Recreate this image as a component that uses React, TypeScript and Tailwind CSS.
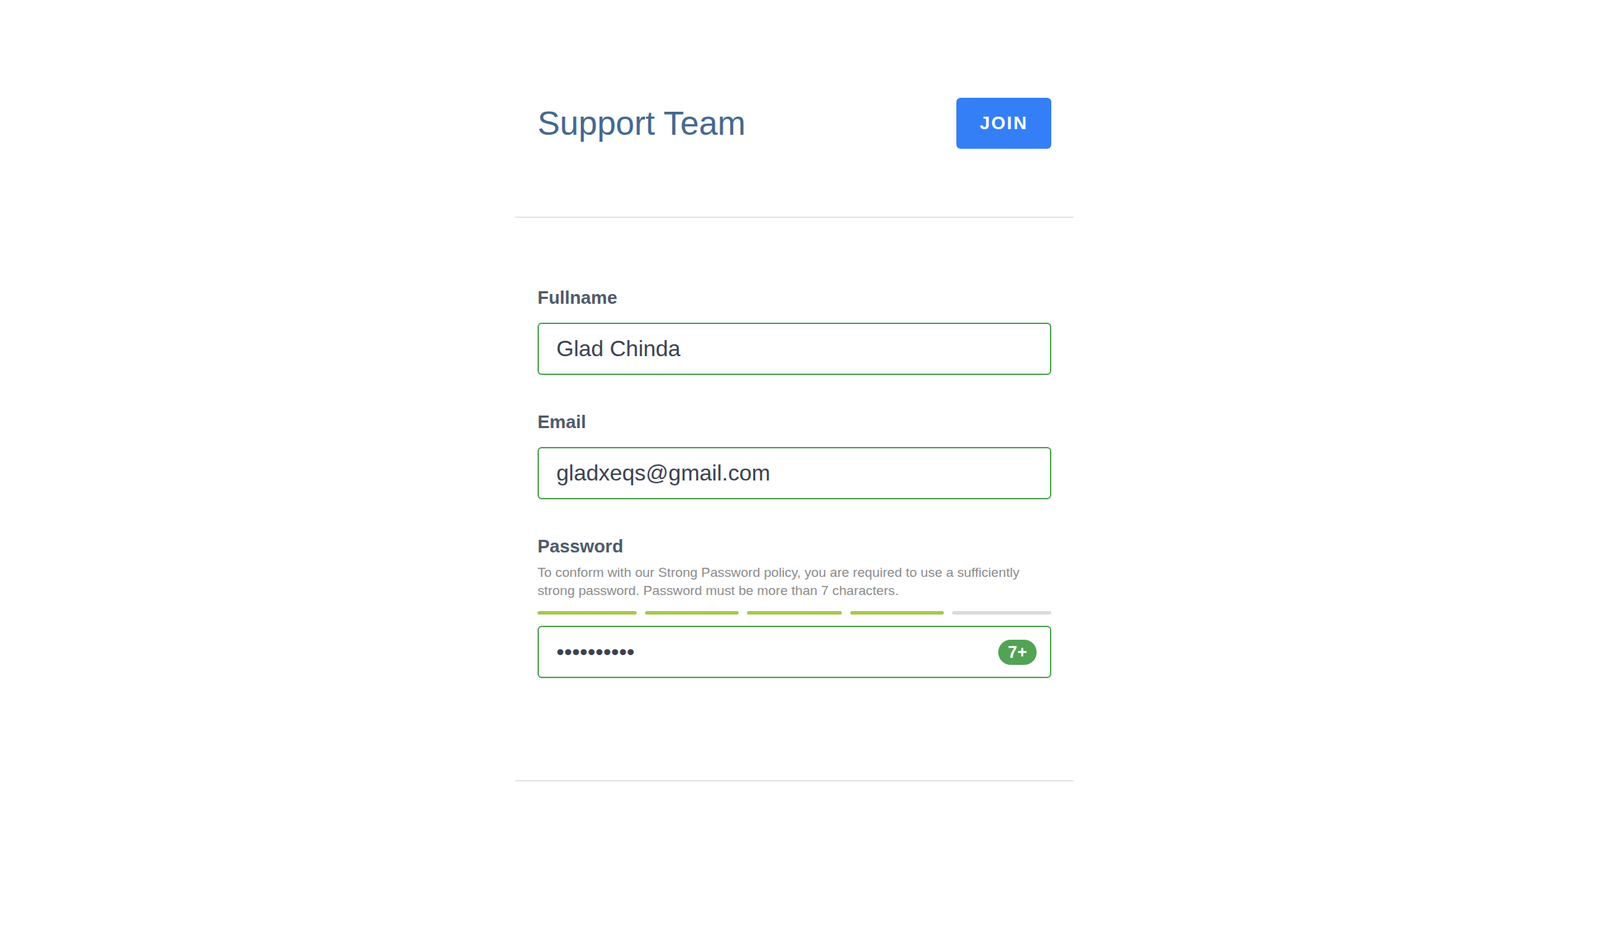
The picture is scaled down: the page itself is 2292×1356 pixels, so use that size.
import React from "react";

const bars = [
    { w: "w-[142px]", on: true },
    { w: "w-[134px]", on: true },
    { w: "w-[136px]", on: true },
    { w: "w-[134px]", on: true },
    { w: "w-[142px]", on: false },
];

function Field({ label, value }: { label: string; value: string }) {
    return (
        <div>
            <label className="block text-[26px] leading-[30px] font-bold text-[#4e5a6b]">{label}</label>
            <input
                readOnly
                defaultValue={value}
                className="mt-[21px] block w-full h-[75px] rounded-[6px] border-2 border-[#52a353] px-[25px] text-[32px] text-[#3b4250] outline-none"
            />
        </div>
    );
}

export default function App() {
    return (
        <main className="min-h-screen bg-white font-['Liberation_Sans',Arial,sans-serif] flex justify-center pr-4">
            <div className="w-[800px]">
                {/* header */}
                <div className="px-8 pt-[140px] pb-[97px] flex items-center justify-between">
                    <h1 className="text-[48px] leading-[56px] text-[#456890]">Support Team</h1>
                    <button className="w-[136px] h-[73px] rounded-[6px] bg-[#347ff5] text-white text-[26px] font-bold tracking-[0.08em]">
                        JOIN
                    </button>
                </div>
                <div className="h-[2px] bg-[#e1e4e9]" />

                {/* form */}
                <div className="px-8 pt-[99px] pb-[146px]">
                    <Field label="Fullname" value="Glad Chinda" />
                    <div className="mt-[52px]">
                        <Field label="Email" value="gladxeqs@gmail.com" />
                    </div>
                    <div className="mt-[52px]">
                        <label className="block text-[26px] leading-[30px] font-bold text-[#4e5a6b]">Password</label>
                        <p className="mt-[10px] text-[19.2px] leading-[26px] text-[#8c8c8c]">
                            To conform with our Strong Password policy, you are required to use a sufficiently
                            strong password. Password must be more than 7 characters.
                        </p>
                        <div className="mt-[16px] flex gap-[12px]">
                            {bars.map((b, i) => (
                                <div
                                    key={i}
                                    className={`${b.w} h-[5px] rounded-full ${b.on ? "bg-[#a6c84c]" : "bg-[#dcdcdc]"}`}
                                />
                            ))}
                        </div>
                        <div className="mt-[16px] relative">
                            <input
                                readOnly
                                type="password"
                                defaultValue="gladchinda"
                                className="block w-full h-[75px] rounded-[6px] border-2 border-[#52a353] pl-[25px] pr-[90px] text-[32px] text-[#3b4250] outline-none"
                            />
                            <span className="absolute right-[21px] top-1/2 -translate-y-1/2 w-[55px] h-[36px] rounded-full bg-[#52a353] text-white text-[24px] font-bold flex items-center justify-center">
                                7+
                            </span>
                        </div>
                    </div>
                </div>
                <div className="h-[2px] bg-[#e1e4e9]" />
            </div>
        </main>
    );
}
